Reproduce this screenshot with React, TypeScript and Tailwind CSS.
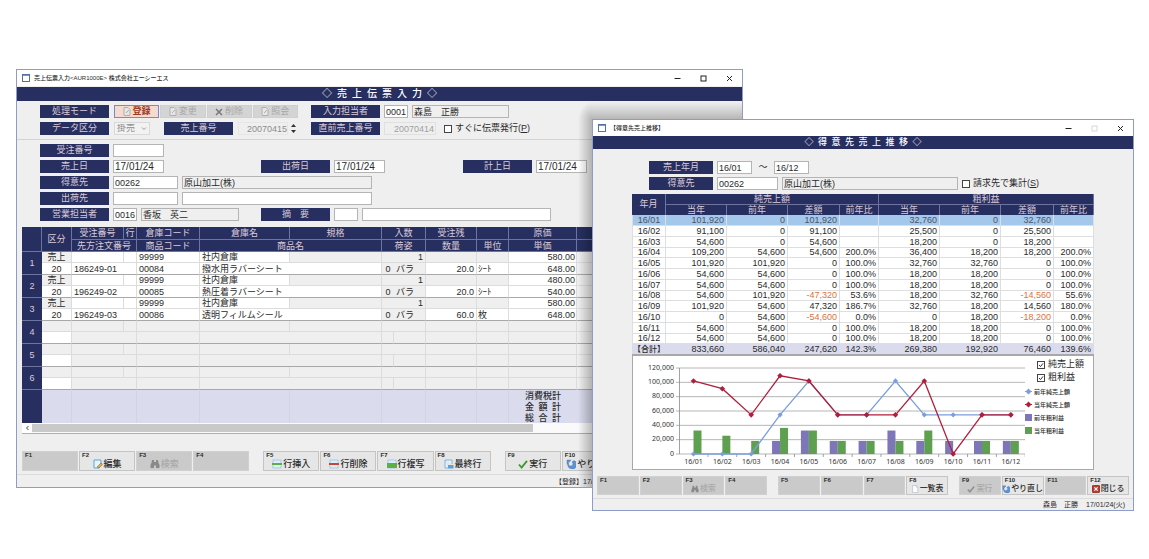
import type { ReactNode } from "react";

const salesRows = [
  { month: "16/01", sales: 101920, prevSales: 0, profit: 32760, prevProfit: 0 },
  { month: "16/02", sales: 91100, prevSales: 0, profit: 25500, prevProfit: 0 },
  { month: "16/03", sales: 54600, prevSales: 0, profit: 18200, prevProfit: 0 },
  { month: "16/04", sales: 109200, prevSales: 54600, salesRate: "200.0%", profit: 36400, prevProfit: 18200, profitRate: "200.0%" },
  { month: "16/05", sales: 101920, prevSales: 101920, salesRate: "100.0%", profit: 32760, prevProfit: 32760, profitRate: "100.0%" },
  { month: "16/06", sales: 54600, prevSales: 54600, salesRate: "100.0%", profit: 18200, prevProfit: 18200, profitRate: "100.0%" },
  { month: "16/07", sales: 54600, prevSales: 54600, salesRate: "100.0%", profit: 18200, prevProfit: 18200, profitRate: "100.0%" },
  { month: "16/08", sales: 54600, prevSales: 101920, salesRate: "53.6%", profit: 18200, prevProfit: 32760, profitRate: "55.6%" },
  { month: "16/09", sales: 101920, prevSales: 54600, salesRate: "186.7%", profit: 32760, prevProfit: 18200, profitRate: "180.0%" },
  { month: "16/10", sales: 0, prevSales: 54600, salesRate: "0.0%", profit: 0, prevProfit: 18200, profitRate: "0.0%" },
  { month: "16/11", sales: 54600, prevSales: 54600, salesRate: "100.0%", profit: 18200, prevProfit: 18200, profitRate: "100.0%" },
  { month: "16/12", sales: 54600, prevSales: 54600, salesRate: "100.0%", profit: 18200, prevProfit: 18200, profitRate: "100.0%" },
];

const slipRows = [
  { order: "186249-01", code: "00084", name: "撥水用ラバーシート", qty: "20.0", unit: "ｼｰﾄ", cost: "580.00", price: "648.00" },
  { order: "196249-02", code: "00085", name: "熱圧着ラバーシート", qty: "20.0", unit: "ｼｰﾄ", cost: "480.00", price: "540.00" },
  { order: "196249-03", code: "00086", name: "透明フィルムシール", qty: "60.0", unit: "枚", cost: "580.00", price: "648.00" },
  null,
  null,
  null,
];

const fmt = (n: number) => n.toLocaleString("en-US");

/* ---------- icons ---------- */

function EditIcon() {
  return (
    <svg width="10" height="10" viewBox="0 0 10 10">
      <path d="M1 1h7v5L6 9H1z" fill="#e8f4fc" stroke="#5aa7d6" />
      <path d="M4 8l4-4 1.5 1.2L6 9z" fill="#e0b34c" stroke="#6b5a2a" strokeWidth=".5" />
    </svg>
  );
}

function BinocularsIcon() {
  return (
    <svg width="10" height="10" viewBox="0 0 10 10" fill="#8a8a8a">
      <path d="M2 1h2v2h2V1h2l.4 2.5L9.5 6v3H6V6.5H4V9H.5V6l1.1-2.5z" />
    </svg>
  );
}

function RowIcon({ color, tall }: { color: string; tall?: boolean }) {
  return (
    <svg width="10" height="10" viewBox="0 0 10 10">
      <rect x="1" y="1" width="8" height="8" fill="#dceef7" stroke="#9cc4dc" strokeWidth=".8" />
      <rect x="0" y="4" width="10" height={tall ? 5 : 2} fill={color} />
    </svg>
  );
}

function LastRowIcon() {
  return (
    <svg width="10" height="10" viewBox="0 0 10 10">
      <path d="M1 1h7v4M1 1v8h3" fill="#e8f4fc" stroke="#7db4dd" />
      <rect x="4" y="6" width="5.5" height="3.5" fill="#5b9fd4" />
    </svg>
  );
}

function CheckIcon({ color }: { color: string }) {
  return (
    <svg width="10" height="10" viewBox="0 0 10 10">
      <path d="M1 5.5l2.6 3L9 1.8" fill="none" stroke={color} strokeWidth="1.9" />
    </svg>
  );
}

function UndoIcon() {
  return (
    <svg width="10" height="10" viewBox="0 0 10 10">
      <path d="M1 1h4L3.8 2.6A2.3 2.3 0 1 0 7 4.4L6 3l2-1.4A4.4 4.4 0 1 1 2 4.6L1 5.4z" fill="#5b93d3" stroke="#3c6fb0" strokeWidth=".4" />
    </svg>
  );
}

function PageIcon() {
  return (
    <svg width="10" height="10" viewBox="0 0 10 10">
      <path d="M2 .5h4.5l2 2v7H2z" fill="#fbfdff" stroke="#a9bccb" strokeWidth=".8" />
      <path d="M6.5.5v2h2" fill="none" stroke="#a9bccb" strokeWidth=".8" />
    </svg>
  );
}

function CloseBoxIcon() {
  return (
    <svg width="10" height="10" viewBox="0 0 10 10">
      <rect x=".5" y=".5" width="9" height="9" rx="1" fill="#c0392b" stroke="#7d1f17" />
      <path d="M3 3l4 4M7 3L3 7" stroke="#fff" strokeWidth="1.5" />
    </svg>
  );
}

function GrayPageIcon() {
  return (
    <svg width="8" height="9" viewBox="0 0 8 9">
      <path d="M1 .5h4l2 2v6H1z" fill="#e6e6e6" stroke="#b0b0b0" />
      <path d="M3 6l3-3" stroke="#b0b0b0" />
    </svg>
  );
}

/* ---------- shared parts ---------- */

function TitleBar({ text, maxDisabled }: { text: string; maxDisabled?: boolean }) {
  return (
    <div className="flex h-4 items-center bg-white pl-[5px] pr-2 text-[6px] font-medium leading-none">
      <svg width="8" height="8" viewBox="0 0 8 8" className="mr-1">
        <rect x=".5" y=".5" width="7" height="7" fill="#fff" stroke="#5470ac" />
        <path d="M0 1h8" stroke="#5470ac" strokeWidth="1.5" />
      </svg>
      <span className="whitespace-nowrap">{text}</span>
      <div className="ml-auto flex gap-[17px]">
        <button aria-label="最小化">
          <svg width="9" height="9" viewBox="0 0 9 9"><path d="M1.5 4.5h6" stroke="#222" /></svg>
        </button>
        <button aria-label="最大化" disabled={maxDisabled}>
          <svg width="9" height="9" viewBox="0 0 9 9">
            <rect x="2" y="2" width="5" height="5" fill="none" stroke={maxDisabled ? "#d8d8d8" : "#222"} />
          </svg>
        </button>
        <button aria-label="閉じる">
          <svg width="9" height="9" viewBox="0 0 9 9"><path d="M2 2l5 5M7 2L2 7" stroke="#222" /></svg>
        </button>
      </div>
    </div>
  );
}

function Tag({ htmlFor, children, narrow }: { htmlFor: string; children: ReactNode; narrow?: boolean }) {
  return (
    <label
      htmlFor={htmlFor}
      className={`flex h-[13px] shrink-0 items-center justify-center whitespace-pre bg-[#262f60] text-[9px] leading-none text-[#dccbd8] ${narrow ? "w-16" : "w-[69px]"}`}
    >
      {children}
    </label>
  );
}

function Box({ id, value, className, label, readOnly }: { id: string; value?: string; className: string; label?: string; readOnly?: boolean }) {
  return (
    <input
      id={id}
      type="text"
      aria-label={label}
      defaultValue={value}
      readOnly={readOnly}
      className={`h-[13px] border border-[#b4b4b4] px-px leading-none ${readOnly ? "bg-[#efefef]" : "bg-white"} ${className}`}
    />
  );
}

function Check({ id, checked, children }: { id: string; checked?: boolean; children: ReactNode }) {
  return (
    <div className="flex items-center gap-[3px] text-[9px] leading-none">
      <span className="relative flex">
        <input id={id} type="checkbox" defaultChecked={checked} className="peer size-2 appearance-none border border-[#444] bg-white" />
        <svg viewBox="0 0 8 8" className="pointer-events-none absolute inset-0 hidden size-2 peer-checked:block">
          <path d="M2 4l1.5 1.6L6 2.4" fill="none" stroke="#333" />
        </svg>
      </span>
      <label htmlFor={id} className="whitespace-nowrap">{children}</label>
    </div>
  );
}

type KeyDef = { text?: string; icon?: ReactNode; disabled?: boolean };

function KeyBar({ keys, className }: { keys: KeyDef[]; className: string }) {
  return (
    <div className={`flex leading-none ${className}`}>
      {[0, 4, 8].map((start) => (
        <div key={start} className="grid flex-1 grid-cols-4 gap-px">
          {keys.slice(start, start + 4).map((k, i) => (
            <button
              key={i}
              disabled={!k.text || k.disabled}
              className={`flex h-full min-w-0 flex-col border ${k.text && !k.disabled ? "border-[#c4c4c4] bg-[#e6e6e6]" : "border-[#d0d0d0] bg-[#cacaca]"}`}
            >
              <span className="pl-0.5 text-left text-[6px] font-bold leading-[7px]">F{start + i + 1}</span>
              <span className={`flex h-[10px] items-center justify-center gap-px self-stretch whitespace-nowrap font-medium ${k.disabled ? "text-[#a9a9a9]" : ""}`}>
                {k.icon}
                {k.text}
              </span>
            </button>
          ))}
        </div>
      ))}
    </div>
  );
}

/* ---------- slip entry window ---------- */

const th = "border-b border-r border-[#6d74a0] font-normal";
const line = "border-r border-b border-[#dcdcdc]";
const lastLine = "border-r border-b border-r-[#dcdcdc] border-b-[#a8a8a8]";

function SlipTable() {
  return (
    <table className="w-full table-fixed border-separate border-spacing-0 text-[9px] leading-[10px]">
      <colgroup>
        <col className="w-5" />
        <col className="w-[30px]" />
        <col className="w-[52px]" />
        <col className="w-[13px]" />
        <col className="w-[63px]" />
        <col className="w-[90px]" />
        <col className="w-[92px]" />
        <col className="w-3" />
        <col className="w-8" />
        <col className="w-[51px]" />
        <col className="w-8" />
        <col className="w-[68px]" />
        <col />
      </colgroup>
      <thead className="bg-[#262f60] text-[#dccbd8]">
        <tr className="h-[13px] whitespace-nowrap">
          <th className={th} rowSpan={2} />
          <th className={th} rowSpan={2}>区分</th>
          <th className={th}>受注番号</th>
          <th className={th}>行</th>
          <th className={th}>倉庫コード</th>
          <th className={th}>倉庫名</th>
          <th className={th}>規格</th>
          <th className={th} colSpan={2}>入数</th>
          <th className={th}>受注残</th>
          <th className={th} />
          <th className={th}>原価</th>
          <th className={th} />
        </tr>
        <tr className="h-3 whitespace-nowrap">
          <th className={th} colSpan={2}>先方注文番号</th>
          <th className={th}>商品コード</th>
          <th className={th} colSpan={2}>商品名</th>
          <th className={th} colSpan={2}>荷姿</th>
          <th className={th}>数量</th>
          <th className={th}>単位</th>
          <th className={th}>単価</th>
          <th className={th} />
        </tr>
      </thead>
      {slipRows.map((r, i) => {
        const bg = r ? "bg-white" : "";
        return (
          <tbody key={i} className="whitespace-nowrap">
            <tr className="h-[11px]">
              <th rowSpan={2} className="border-b border-[#6d74a0] bg-[#262f60] font-normal text-[#dccbd8]">{i + 1}</th>
              <td className={`text-center ${line}`}>{r && "売上"}</td>
              <td className={`${line} ${bg}`} />
              <td className={`${line} ${bg}`} />
              <td className={`pl-0.5 ${line} ${bg}`}>{r && "99999"}</td>
              <td className={`pl-0.5 ${line} ${bg}`}>{r && "社内倉庫"}</td>
              <td className={line} />
              <td colSpan={2} className={`pr-0.5 text-right ${line}`}>{r && "1"}</td>
              <td className={line} />
              <td className={line} />
              <td className={`pr-px text-right ${line} ${bg}`}>{r?.cost}</td>
              <td className={line} />
            </tr>
            <tr className="h-3">
              <td className={`bg-white text-center ${lastLine}`}>{r && "20"}</td>
              <td colSpan={2} className={`pl-0.5 ${lastLine} ${bg}`}>{r?.order}</td>
              <td className={`pl-0.5 ${lastLine} ${bg}`}>{r?.code}</td>
              <td colSpan={2} className={`pl-0.5 ${lastLine} ${bg}`}>{r?.name}</td>
              <td className={`text-center ${r ? "border-b border-[#a8a8a8]" : lastLine}`}>{r && "0"}</td>
              <td className={`pl-0.5 ${lastLine}`}>{r && "バラ"}</td>
              <td className={`pr-0.5 text-right ${lastLine} ${bg}`}>{r?.qty}</td>
              <td className={`pl-px ${lastLine} ${bg}`}>{r?.unit}</td>
              <td className={`pr-px text-right ${lastLine} ${bg}`}>{r?.price}</td>
              <td className={lastLine} />
            </tr>
          </tbody>
        );
      })}
      <tfoot className="bg-[#dadcee]">
        {["消費税計", "金\u2002額\u2002計", "総\u2002合\u2002計"].map((t, i) => (
          <tr key={t} className="h-[11px]">
            {i === 0 && <td rowSpan={3} className="bg-[#262f60]" />}
            <td className="border-r border-[#d2d4e4]" />
            <td colSpan={2} className="border-r border-[#d2d4e4]" />
            <td className="border-r border-[#d2d4e4]" />
            <td className="border-r border-[#d2d4e4]" />
            <td className="border-r border-[#d2d4e4]" />
            <td colSpan={2} className="border-r border-[#d2d4e4]" />
            <td className="border-r border-[#d2d4e4]" />
            <td className="border-r border-[#d2d4e4]" />
            <td className="text-center font-medium">{t}</td>
            <td />
          </tr>
        ))}
      </tfoot>
    </table>
  );
}

const slipKeys: KeyDef[] = [
  {},
  { text: "編集", icon: <EditIcon /> },
  { text: "検索", icon: <BinocularsIcon />, disabled: true },
  {},
  { text: "行挿入", icon: <RowIcon color="#5bb04a" /> },
  { text: "行削除", icon: <RowIcon color="#c4473a" /> },
  { text: "行複写", icon: <RowIcon color="#5bb04a" tall /> },
  { text: "最終行", icon: <LastRowIcon /> },
  { text: "実行", icon: <CheckIcon color="#3f9a35" /> },
  { text: "やり直し", icon: <UndoIcon /> },
  {},
  {},
];

function SlipWindow() {
  const mode = "flex flex-1 items-center justify-center gap-0.5 border text-[9px] leading-none";
  return (
    <section className="absolute left-4 right-[406px] top-[69px] overflow-hidden border border-[#8d9cc8] bg-[#efefef]">
      <TitleBar text="売上伝票入力<AUR1000E> 株式会社エーシーエス" />
      <h1 className="mt-px flex h-[14px] items-center justify-center bg-[#262f60] text-[10px] font-medium leading-none text-white">
        {"◇\u2002売\u2002上\u2002伝\u2002票\u2002入\u2002力\u2002◇"}
      </h1>

      <div className="flex flex-col gap-1 border-b border-[#d4d4d4] py-1 pl-[23px]">
        <div className="flex">
          <div className="flex w-[271px] gap-[5px]">
            <Tag htmlFor="mode">処理モード</Tag>
            <div className="flex h-[13px] w-[184px] gap-px">
              <button id="mode" className={`${mode} border-[#6d8fd0] bg-[#f6d9cf] font-bold text-[#9c3a22]`}>
                <GrayPageIcon />登録
              </button>
              <button disabled className={`${mode} border-[#cfcfcf] bg-[#d4d4d4] text-[#a6a6a6]`}><GrayPageIcon />変更</button>
              <button disabled className={`${mode} border-[#cfcfcf] bg-[#d4d4d4] text-[#a6a6a6]`}>
                <svg width="8" height="8" viewBox="0 0 8 8"><path d="M1 1l6 6M7 1L1 7" stroke="#777" strokeWidth="1.5" /></svg>削除
              </button>
              <button disabled className={`${mode} border-[#cfcfcf] bg-[#d4d4d4] text-[#a6a6a6]`}><GrayPageIcon />照会</button>
            </div>
          </div>
          <div className="flex gap-1">
            <Tag htmlFor="staff">入力担当者</Tag>
            <Box id="staff" value="0001" className="w-6 text-[9px]" />
            <Box id="staffName" label="入力担当者名" value="森島　正勝" readOnly className="w-[97px] text-[9px]" />
          </div>
        </div>
        <div className="flex">
          <div className="flex w-[271px] gap-[5px]">
            <Tag htmlFor="kind">データ区分</Tag>
            <div className="relative mr-[9px] flex">
              <select id="kind" disabled className="h-[13px] w-9 appearance-none border border-[#d9d9d9] bg-[#f2f2f2] pl-0.5 text-[9px] leading-none text-[#8c8c8c] opacity-100">
                <option>掛売</option>
              </select>
              <svg width="6" height="4" viewBox="0 0 6 4" className="absolute right-[3px] top-[5px]">
                <path d="M1 .5l2 2 2-2" fill="none" stroke="#9a9a9a" />
              </svg>
            </div>
            <Tag htmlFor="slipNo">売上番号</Tag>
            <div className="flex items-center">
              <input id="slipNo" defaultValue="20070415" disabled className="h-[13px] w-[50px] border border-[#e6e6e6] bg-[#efefef] text-right text-[9px] leading-none text-[#8c8c8c]" />
              <svg width="7" height="11" viewBox="0 0 7 11" className="ml-0.5" fill="#333">
                <path d="M3.5 1L6 4H1zM3.5 10L1 7h5z" />
              </svg>
            </div>
          </div>
          <div className="flex gap-1">
            <Tag htmlFor="lastNo">直前売上番号</Tag>
            <input id="lastNo" defaultValue="20070414" disabled className="mr-1 h-[13px] w-[52px] border border-[#e0e0e0] bg-[#efefef] px-px text-right text-[9px] leading-none text-[#a0a0a0]" />
            <Check id="issue">すぐに伝票発行(<u>P</u>)</Check>
          </div>
        </div>
      </div>

      <div className="flex flex-col gap-[3px] pb-1.5 pl-[23px] pt-1">
        <div className="flex gap-1">
          <Tag htmlFor="orderNo">受注番号</Tag>
          <Box id="orderNo" className="w-[51px] text-[10px]" />
        </div>
        <div className="flex">
          <div className="flex w-[221px] gap-1">
            <Tag htmlFor="salesDate">売上日</Tag>
            <Box id="salesDate" value="17/01/24" className="w-[51px] text-[10px]" />
          </div>
          <div className="flex w-[202px] gap-1">
            <Tag htmlFor="shipDate">出荷日</Tag>
            <Box id="shipDate" value="17/01/24" className="w-[51px] text-[10px]" />
          </div>
          <div className="flex gap-1">
            <Tag htmlFor="postDate">計上日</Tag>
            <Box id="postDate" value="17/01/24" className="w-[51px] text-[10px]" />
          </div>
        </div>
        <div className="flex gap-1">
          <Tag htmlFor="customer">得意先</Tag>
          <Box id="customer" value="00262" className="w-[65px] text-[9px]" />
          <Box id="customerName" label="得意先名" value="原山加工(株)" readOnly className="w-[190px] text-[9px]" />
        </div>
        <div className="flex gap-1">
          <Tag htmlFor="shipTo">出荷先</Tag>
          <Box id="shipTo" className="w-[65px] text-[9px]" />
          <Box id="shipToName" label="出荷先名" className="w-[190px] text-[9px]" />
        </div>
        <div className="flex">
          <div className="flex w-[221px] gap-1">
            <Tag htmlFor="rep">営業担当者</Tag>
            <Box id="rep" value="0016" className="w-6 text-[9px]" />
            <Box id="repName" label="営業担当者名" value="香坂　英二" readOnly className="w-[98px] text-[9px]" />
          </div>
          <div className="flex gap-1">
            <Tag htmlFor="memo">摘　要</Tag>
            <Box id="memo" className="w-6 text-[9px]" />
            <Box id="memoText" label="摘要内容" className="w-[189px] text-[9px]" />
          </div>
        </div>
      </div>

      <div className="mx-[5px]">
        <SlipTable />
        <div className="flex h-[11px] border-b border-[#b0b0b0] bg-[#fafafa]">
          <button aria-label="左へ" className="flex w-[10px] items-center justify-center bg-white">
            <svg width="5" height="6" viewBox="0 0 5 6"><path d="M3.5 1L1.5 3l2 2" fill="none" stroke="#444" /></svg>
          </button>
          <div className="h-2 w-[70%] self-center bg-[#c9c9c9]" />
        </div>
      </div>

      <KeyBar keys={slipKeys} className="mt-[17px] h-5 gap-[14px] pl-[5px] pr-[10px] text-[9px]" />
      <div className="mt-[3px] flex h-[13px] items-center justify-end border-t border-[#dcdcdc] text-[7px] leading-none">
        <span className="w-[187px]">【登録】17/0</span>
      </div>

      {/* shade cast by the front window */}
      <div className="pointer-events-none absolute left-[575px] right-0 top-8 h-[18px] bg-linear-to-b from-transparent to-black/25" />
      <div className="pointer-events-none absolute left-[561px] top-8 h-[18px] w-[14px] bg-[radial-gradient(farthest-side_at_bottom_right,rgba(0,0,0,0.25),transparent)]" />
      <div className="pointer-events-none absolute bottom-0 left-[561px] top-[50px] w-[14px] bg-linear-to-r from-transparent to-black/25" />
    </section>
  );
}

/* ---------- customer trend window ---------- */

function Num({ n }: { n: number }) {
  return (
    <td className={`border-b border-r border-[#dedede] pr-0.5 text-right ${n < 0 ? "text-[#e07040]" : ""}`}>{fmt(n)}</td>
  );
}

function TrendTable() {
  const rate = "border-b border-r border-[#dedede] pr-0.5 text-right";
  const sum = "border-b border-[#a8a8a8] pr-[3px] text-right";
  return (
    <table className="w-full table-fixed border-separate border-spacing-0 bg-white text-[9px] leading-[9px]">
      <colgroup>
        <col className="w-[34px]" />
        <col className="w-[61px]" />
        <col className="w-[61px]" />
        <col className="w-[52px]" />
        <col className="w-[39px]" />
        <col className="w-[61px]" />
        <col className="w-[61px]" />
        <col className="w-[53px]" />
        <col className="w-10" />
      </colgroup>
      <thead className="bg-[#262f60] text-[#dccbd8]">
        <tr className="h-[11px]">
          <th className="border-r border-[#6d74a0] font-normal" rowSpan={2}>年月</th>
          <th className={th} colSpan={4}>純売上額</th>
          <th className={th} colSpan={4}>粗利益</th>
        </tr>
        <tr className="h-[10px]">
          {["当年", "前年", "差額", "前年比", "当年", "前年", "差額", "前年比"].map((t, i) => (
            <th key={i} className="whitespace-nowrap border-r border-[#6d74a0] font-normal">{t}</th>
          ))}
        </tr>
      </thead>
      <tbody>
        {salesRows.map((r) => (
          <tr key={r.month} className="h-[11px] first:bg-[#a3c8ec] first:text-[#4a5568] nth-[4n]:h-[10px]">
            <td className="border-b border-l border-r border-[#dedede] text-center">{r.month}</td>
            <Num n={r.sales} />
            <Num n={r.prevSales} />
            <Num n={r.sales - r.prevSales} />
            <td className={rate}>{r.salesRate}</td>
            <Num n={r.profit} />
            <Num n={r.prevProfit} />
            <Num n={r.profit - r.prevProfit} />
            <td className={rate}>{r.profitRate}</td>
          </tr>
        ))}
      </tbody>
      <tfoot className="bg-[#dadcee]">
        <tr className="h-[11px]">
          <td className="whitespace-nowrap border-b border-[#a8a8a8] text-center text-[8px] font-medium">【合計】</td>
          <td className={sum}>833,660</td>
          <td className={sum}>586,040</td>
          <td className={sum}>247,620</td>
          <td className={sum}>142.3%</td>
          <td className={sum}>269,380</td>
          <td className={sum}>192,920</td>
          <td className={sum}>76,460</td>
          <td className={sum}>139.6%</td>
        </tr>
      </tfoot>
    </table>
  );
}

const cx = (i: number) => 60.5 + i * 28.85;
const cy = (v: number) => 98 - (v / 120000) * 86;

function Line({ values, color, size }: { values: number[]; color: string; size: number }) {
  return (
    <g>
      <polyline points={values.map((v, i) => `${cx(i)},${cy(v)}`).join(" ")} fill="none" stroke={color} strokeWidth="1.3" />
      {values.map((v, i) => (
        <path key={i} d={`M${cx(i) - size} ${cy(v)}l${size} -${size}l${size} ${size}l-${size} ${size}z`} fill={color} />
      ))}
    </g>
  );
}

function Chart() {
  return (
    <svg viewBox="0 0 392 113" className="min-w-0 flex-1" fontFamily="'Noto Sans', 'Liberation Sans', sans-serif" fontSize="7" fill="#333">
      {[0, 20000, 40000, 60000, 80000, 100000, 120000].map((v) => (
        <g key={v}>
          <path d={`M43 ${cy(v)}H392`} stroke="#a3a3a3" strokeWidth=".8" />
          <text x="41" y={cy(v) + 1.5} textAnchor="end">{fmt(v)}</text>
        </g>
      ))}
      <path d="M46.5 12V98" stroke="#8a8a8a" strokeWidth=".8" />
      {salesRows.map((r, i) => (
        <g key={r.month}>
          <rect x={cx(i) - 8} y={cy(r.prevProfit)} width="8" height={98 - cy(r.prevProfit)} fill="#7d76b8" />
          <rect x={cx(i)} y={cy(r.profit)} width="8" height={98 - cy(r.profit)} fill="#5f9f50" />
          <path d={`M${cx(i) + 14.4} 98v3`} stroke="#8a8a8a" strokeWidth=".8" />
          <text x={cx(i)} y="108" textAnchor="middle">{r.month}</text>
        </g>
      ))}
      <Line values={salesRows.map((r) => r.prevSales)} color="#7b9fdc" size={2.6} />
      <Line values={salesRows.map((r) => r.sales)} color="#b01e3c" size={2.8} />
    </svg>
  );
}

const legend = [
  { text: "前年純売上額", color: "#7b9fdc", line: true },
  { text: "当年純売上額", color: "#b01e3c", line: true },
  { text: "前年粗利益", color: "#7d76b8" },
  { text: "当年粗利益", color: "#5f9f50" },
];

const trendKeys: KeyDef[] = [
  {},
  {},
  { text: "検索", icon: <BinocularsIcon />, disabled: true },
  {},
  {},
  {},
  {},
  { text: "一覧表", icon: <PageIcon /> },
  { text: "実行", icon: <CheckIcon color="#8f8f8f" />, disabled: true },
  { text: "やり直し", icon: <UndoIcon /> },
  {},
  { text: "閉じる", icon: <CloseBoxIcon /> },
];

function TrendWindow() {
  return (
    <section className="absolute left-[592px] right-[15px] top-[119px] border border-[#8d9cc8] bg-[#efefef]">
      <TitleBar text="【得意先売上推移】" maxDisabled />
      <h2 className="flex h-[13px] items-center justify-center bg-[#262f60] text-[9px] font-medium leading-none text-white">
        {"◇\u2002得\u2002意\u2002先\u2002売\u2002上\u2002推\u2002移\u2002◇"}
      </h2>
      <div className="mx-[39px] mt-3">
        <div className="mb-1 flex flex-col gap-[3px] pl-[17px]">
          <div className="flex items-center gap-1">
            <Tag htmlFor="from" narrow>売上年月</Tag>
            <Box id="from" value="16/01" className="w-[35px] text-[9px]" />
            <span className="w-[14px] text-center text-[9px] leading-none">～</span>
            <Box id="to" label="売上年月(終了)" value="16/12" className="w-[35px] text-[9px]" />
          </div>
          <div className="flex items-center gap-1">
            <Tag htmlFor="trendCustomer" narrow>得意先</Tag>
            <Box id="trendCustomer" value="00262" className="w-[61px] text-[9px]" />
            <Box id="trendCustomerName" label="得意先名" value="原山加工(株)" readOnly className="w-[176px] text-[9px]" />
            <Check id="bill">請求先で集計(<u>S</u>)</Check>
          </div>
        </div>
        <TrendTable />
        <div className="flex border border-[#a8a8a8] bg-white">
          <Chart />
          <div className="w-[68px] shrink-0 pt-0.5">
            <div className="mb-[3px] flex flex-col gap-1 pl-3 pt-0.5">
              <Check id="showSales" checked>純売上額</Check>
              <Check id="showProfit" checked>粗利益</Check>
            </div>
            <ul className="text-[6px] font-medium leading-none">
              {legend.map((l) => (
                <li key={l.text} className="flex h-[13px] items-center gap-0.5 whitespace-nowrap">
                  <svg width="7" height="7" viewBox="0 0 7 7">
                    {l.line ? (
                      <path d="M0 3h1L3.5 .5 6 3h1v1H6L3.5 6.5 1 4H0z" fill={l.color} />
                    ) : (
                      <rect width="7" height="7" fill={l.color} />
                    )}
                  </svg>
                  {l.text}
                </li>
              ))}
            </ul>
          </div>
        </div>
      </div>
      <KeyBar keys={trendKeys} className="mt-1.5 h-[19px] gap-[11px] px-1 text-[8px] [&_svg]:size-2 [&_svg]:shrink-0" />
      <div className="mt-[3px] flex h-3 items-center justify-end gap-2 border-t border-[#dcdcdc] pr-2 text-[7px] leading-none">
        <span>森島　正勝</span>
        <span>17/01/24(火)</span>
      </div>
    </section>
  );
}

export default function App() {
  return (
    <main className="relative min-h-screen overflow-hidden bg-white font-['Liberation_Sans','Noto_Sans_CJK_JP',sans-serif] text-[#2a2a2a]">
      <SlipWindow />
      <TrendWindow />
    </main>
  );
}
